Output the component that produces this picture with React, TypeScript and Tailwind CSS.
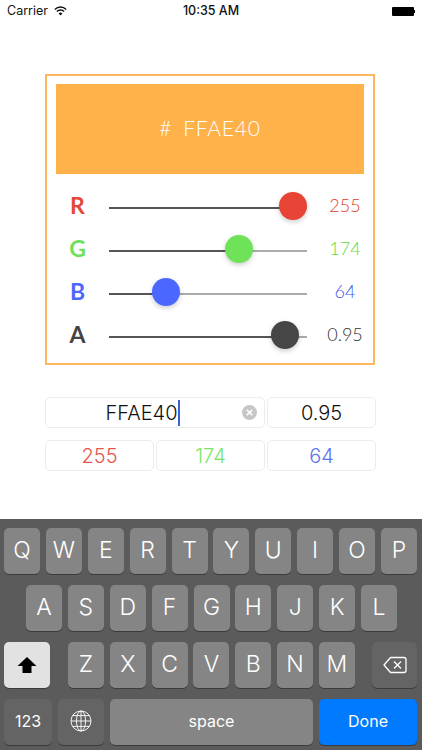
import React from 'react';

const channels = [
  { label: 'R', value: 255, max: 255, text: '255', color: 'text-[#e5483a]', soft: 'text-[#e23d2e]', thumb: 'bg-[#e84436]' },
  { label: 'G', value: 174, max: 255, text: '174', color: 'text-[#6fe05a]', soft: 'text-[#5edb48]', thumb: 'bg-[#6ee259]' },
  { label: 'B', value: 64, max: 255, text: '64', color: 'text-[#4d68fb]', soft: 'text-[#3d5ae8]', thumb: 'bg-[#4a68ff]' },
  { label: 'A', value: 0.95, max: 1, text: '0.95', color: 'text-[#444444]', soft: 'text-[#333333]', thumb: 'bg-[#464646]' },
];

const TRACK = 198;
const THUMB = 28;

const Slider: React.FC<{ value: number; max: number; thumb: string }> = ({ value, max, thumb }) => {
  const left = ((TRACK - THUMB) * value) / max;
  return (
    <div className="relative w-[198px] h-[2px] mt-[3px] bg-[#ababab]">
      <div className="h-full bg-[#555555]" style={{ width: left + 4 }} />
      <div
        className={`absolute top-[-15px] w-[28px] h-[28px] rounded-full shadow-[0_2px_5px_rgba(0,0,0,0.2)] ${thumb}`}
        style={{ left }}
      />
    </div>
  );
};

const Key: React.FC<{ children: React.ReactNode; className?: string }> = ({ children, className = 'flex-1 bg-[#858585] text-white' }) => (
  <div className={`h-[46px] rounded-[5px] flex items-center justify-center shadow-[0_1px_0_#3c3c3c] ${className}`}>
    {children}
  </div>
);

const Letter: React.FC<{ k: string }> = ({ k }) => (
  <div className="w-[36px] h-[46px] pb-[2px] rounded-[5px] flex items-center justify-center bg-[#858585] text-white text-[23px] font-light shadow-[0_1px_0_#3c3c3c]">
    {k}
  </div>
);

const Field: React.FC<{ className?: string; children: React.ReactNode }> = ({ className = '', children }) => (
  <div className={`h-[31px] border border-[#ececec] rounded-[5px] flex items-center justify-center ${className}`}>
    {children}
  </div>
);

export default function App() {
  return (
    <div className="w-[422px] h-[750px] bg-white flex flex-col overflow-hidden font-['Inter',sans-serif]">
      {/* status bar */}
      <div className="h-[22px] grid grid-cols-3 items-center px-[7px] text-[12.5px] text-[#111111]">
        <div className="flex items-center gap-[6px]">
          <span>Carrier</span>
          <svg width="13" height="10" viewBox="0 0 13 10" fill="none" stroke="#111" strokeWidth="1.4">
            <path d="M0.8 3.4a8 8 0 0 1 11.4 0" />
            <path d="M2.8 5.5a5.2 5.2 0 0 1 7.4 0" />
            <path d="M6.5 9.4L4.6 7.4a2.7 2.7 0 0 1 3.8 0z" fill="#111" stroke="none" />
          </svg>
        </div>
        <div className="text-center font-medium">10:35 AM</div>
        <div className="flex justify-end items-center">
          <div className="w-[22px] h-[9px] rounded-[1px] bg-black" />
          <div className="w-[1px] h-[3px] bg-black" />
        </div>
      </div>

      {/* colour card */}
      <div className="mt-[52px] ml-[45px] w-[330px] h-[291px] border-2 border-[#fdb75c] pt-[8px] px-[9px] font-['Lato',sans-serif]">
        <div className="h-[90px] pb-[2px] bg-[#ffb14a] flex items-center justify-center text-white text-[21px] font-light tracking-[0.8px] gap-[11px]">
          <span>#</span>
          <span>FFAE40</span>
        </div>
        <div className="mt-[11px] flex flex-col">
          {channels.map((c) => (
            <div key={c.label} className="h-[43px] flex items-center">
              <div className={`w-[43px] pb-[2px] text-center text-[23px] font-bold ${c.color}`}>{c.label}</div>
              <div className="ml-[10px]">
                <Slider value={c.value} max={c.max} thumb={c.thumb} />
              </div>
              <div className={`ml-[19px] w-[38px] pb-[2px] text-center text-[18px] font-light ${c.soft}`}>{c.text}</div>
            </div>
          ))}
        </div>
      </div>

      {/* fields */}
      <div className="mt-[32px] ml-[45px] w-[331px] flex flex-col gap-[12px] text-[20px] font-light">
        <div className="flex gap-[2px]">
          <Field className="relative w-[220px] pr-[25px] text-[#111111]">
            <span>FFAE40</span>
            <span className="w-[2px] h-[26px] bg-[#3f5fd4]" />
            <div className="absolute right-[7px] top-[7px] w-[15px] h-[15px] rounded-full bg-[#c6c6c6] flex items-center justify-center">
              <svg width="7" height="7" viewBox="0 0 7 7" stroke="#fff" strokeWidth="1.6">
                <path d="M0.7 0.7l5.6 5.6M6.3 0.7L0.7 6.3" />
              </svg>
            </div>
          </Field>
          <Field className="flex-1 text-[#111111]">0.95</Field>
        </div>
        <div className="flex gap-[2px]">
          <Field className="flex-1 text-[#e0574b]">255</Field>
          <Field className="flex-1 text-[#7be468]">174</Field>
          <Field className="flex-1 text-[#5a74ee]">64</Field>
        </div>
      </div>

      {/* keyboard */}
      <div className="mt-auto h-[231px] bg-[#5b5b5b] pt-[9px] pl-[4px] pr-[5px] flex flex-col gap-[11px]">
        <div className="flex justify-between">
          {'QWERTYUIOP'.split('').map((k) => <Letter key={k} k={k} />)}
        </div>
        <div className="flex justify-between pl-[22px] pr-[20px]">
          {'ASDFGHJKL'.split('').map((k) => <Letter key={k} k={k} />)}
        </div>
        <div className="flex">
          <Key className="w-[46px] bg-[#e2e2e2]">
            <svg width="20" height="18" viewBox="0 0 20 18" fill="#000">
              <path d="M10 1L19.5 10H14.5V17H5.5V10H0.5Z" />
            </svg>
          </Key>
          <div className="ml-[18px] flex-1 flex gap-[5.8px]">
            {'ZXCVBNM'.split('').map((k) => <Letter key={k} k={k} />)}
          </div>
          <Key className="w-[45px] bg-[#646464]">
            <svg width="24" height="18" viewBox="0 0 24 18" fill="none" stroke="#fff" strokeWidth="1.3" strokeLinejoin="round">
              <path d="M7.5 1.5H21a2 2 0 0 1 2 2v11a2 2 0 0 1-2 2H7.5L1 9z" />
              <path d="M11 5.5l7 7M18 5.5l-7 7" />
            </svg>
          </Key>
        </div>
        <div className="flex gap-[6px] text-[16px] text-white">
          <Key className="w-[48px] pb-[3px] bg-[#646464]">123</Key>
          <Key className="w-[46px] pb-[3px] bg-[#646464]">
            <svg width="22" height="22" viewBox="0 0 22 22" fill="none" stroke="#fff" strokeWidth="0.9">
              <circle cx="11" cy="11" r="10" />
              <ellipse cx="11" cy="11" rx="4.6" ry="10" />
              <path d="M11 1v20M1 11h20M2.6 5.6h16.8M2.6 16.4h16.8" />
            </svg>
          </Key>
          <Key className="w-[203px] pb-[3px] bg-[#858585]">space</Key>
          <Key className="flex-1 pb-[3px] bg-[#007aff]">Done</Key>
        </div>
      </div>
    </div>
  );
}
